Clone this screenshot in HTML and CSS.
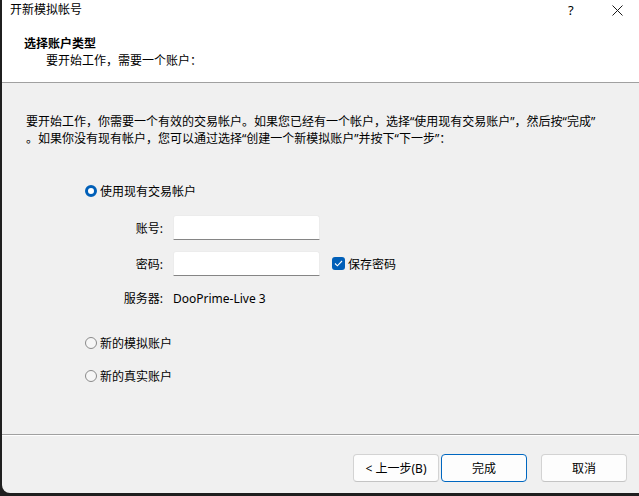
FILE: index.html
```html
<!DOCTYPE html>
<html lang="zh-CN">
<head>
<meta charset="utf-8">
<title>开新模拟帐号</title>
<link rel="stylesheet" href="styles.css">
</head>
<body>
<div class="window">
  <div class="head">
    <div class="titlebar">
      <span class="title">开新模拟帐号</span>
      <span class="help">?</span>
      <span class="close"><svg width="11" height="11" viewBox="0 0 11 11"><path d="M0.5 0.5 L10.5 10.5 M10.5 0.5 L0.5 10.5" stroke="#1a1a1a" stroke-width="1" fill="none"/></svg></span>
    </div>
    <div class="h1">选择账户类型</div>
    <div class="sub">要开始工作，需要一个账户：</div>
  </div>
  <div class="content">
    <p class="para"><span class="line">要开始工作，你需要一个有效的交易帐户。如果您已经有一个帐户，选择“使用现有交易账户”，然后按“完成”</span><span class="line">。如果你没有现有帐户，您可以通过选择“创建一个新模拟账户”并按下“下一步”：</span></p>
    <div class="radio-row r1"><span class="radio on"></span><span>使用现有交易帐户</span></div>
    <div class="form">
      <span class="lbl">账号:</span><span class="input"></span><span></span>
      <span class="lbl">密码:</span><span class="input"></span><span class="check"><span class="box"><svg width="9" height="7" viewBox="0 0 9 7"><path d="M1 3.5 L3.4 5.8 L8 1" stroke="#fff" stroke-width="1.1" fill="none"/></svg></span>保存密码</span>
      <span class="lbl srv">服务器:</span><span class="srv">DooPrime-Live 3</span><span></span>
    </div>
    <div class="radio-row r2"><span class="radio"></span><span>新的模拟账户</span></div>
    <div class="radio-row r3"><span class="radio"></span><span>新的真实账户</span></div>
  </div>
  <div class="footer">
    <button class="btn">&lt; 上一步(B)</button>
    <button class="btn focus">完成</button>
    <button class="btn cancel">取消</button>
  </div>
</div>
</body>
</html>
```
FILE: styles.css
```css
html, body {
  margin: 0;
  padding: 0;
}
body {
  background: #1f1f1f;
  width: 639px;
  height: 496px;
  overflow: hidden;
  font-family: "Noto Sans", "Noto Sans CJK SC", sans-serif;
  font-size: 12px;
  color: #000;
}
.window {
  margin-left: 2px;
  width: 637px;
  height: 493px;
  background: #f0f0f0;
  border-bottom-left-radius: 8px;
  display: flex;
  flex-direction: column;
  overflow: hidden;
}
.head {
  background: #fff;
  height: 82px;
  border-bottom: 1px solid #a0a0a0;
  flex: none;
}
.titlebar {
  height: 20px;
  line-height: 20px;
  display: flex;
  align-items: center;
  padding-left: 8px;
}
.title {
  flex: 1;
}
.help {
  width: 6px;
  margin-right: 38px;
  font-size: 13px;
}
.close {
  display: flex;
  margin-right: 16px;
}
.h1 {
  font-weight: bold;
  line-height: 16px;
  margin-top: 16px;
  padding-left: 22px;
}
.sub {
  line-height: 16px;
  margin-top: 1px;
  padding-left: 44px;
}
.content {
  flex: 1;
  display: flex;
  flex-direction: column;
  padding-left: 24px;
}
.para {
  margin: 30px 0 0 0;
  line-height: 17px;
}
.line {
  display: block;
  white-space: nowrap;
}
.radio-row {
  display: flex;
  align-items: center;
  height: 17px;
  padding-left: 59px;
  gap: 3px;
}
.r1 { margin-top: 35px; }
.r2 { margin-top: 27px; }
.r3 { margin-top: 16px; }
.radio {
  width: 12px;
  height: 12px;
  box-sizing: border-box;
  border-radius: 50%;
  border: 1px solid #8a8a8a;
  background: #f6f6f6;
  flex: none;
}
.radio.on {
  border: 3.5px solid #005fb8;
  background: #fff;
}
.form {
  display: grid;
  grid-template-columns: 63px 147px auto;
  column-gap: 10px;
  row-gap: 11px;
  align-items: center;
  margin-top: 16px;
  padding-left: 74px;
}
.lbl {
  text-align: right;
}
.input {
  height: 25px;
  box-sizing: border-box;
  background: #fff;
  border: 1px solid #ececec;
  border-bottom: 1px solid #858585;
  border-radius: 3px 3px 0 0;
}
.srv {
  margin-top: 3px;
  line-height: 17px;
}
.check {
  display: flex;
  align-items: center;
  gap: 3px;
  margin-left: 2px;
}
.box {
  width: 13px;
  height: 13px;
  border-radius: 3px;
  background: #005fb8;
  display: flex;
  align-items: center;
  justify-content: center;
}
.footer {
  flex: none;
  height: 59px;
  border-top: 1px solid #a0a0a0;
  box-shadow: inset 0 1px 0 #ffffff;
  display: flex;
  align-items: flex-start;
  justify-content: flex-end;
  padding-top: 19px;
  padding-right: 12px;
  box-sizing: border-box;
}
.btn {
  width: 86px;
  height: 28px;
  box-sizing: border-box;
  background: #fdfdfd;
  border: 1px solid #d3d3d3;
  border-bottom-color: #c4c4c4;
  border-radius: 4px;
  font-family: "Noto Sans", "Noto Sans CJK SC", sans-serif;
  font-size: 12px;
  color: #000;
  padding: 0;
  margin-left: 2px;
}
.btn.focus {
  border: 1px solid #0067c0;
}
.btn.cancel {
  margin-left: 14px;
}
```
